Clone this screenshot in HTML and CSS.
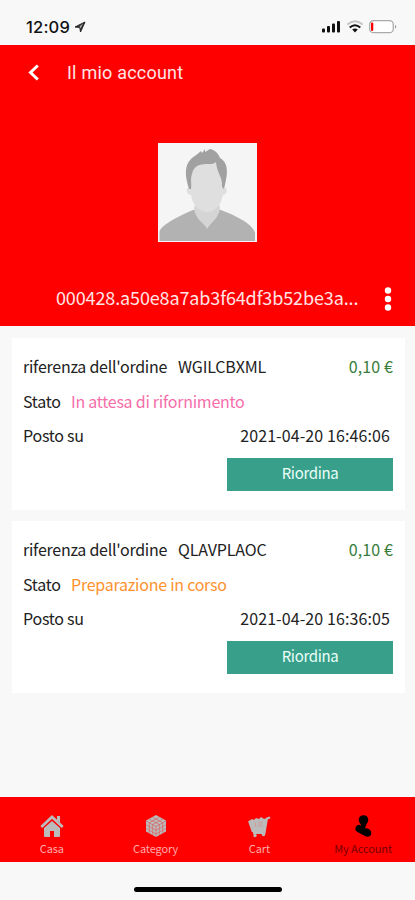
FILE: index.html
```html
<!DOCTYPE html>
<html lang="it">
<head>
<meta charset="utf-8">
<meta name="viewport" content="width=device-width, initial-scale=1">
<title>Il mio account</title>
<link rel="stylesheet" href="styles.css">
</head>
<body>
<div class="status">
  <span class="time">12:09</span>
  <svg class="loc" width="12" height="12" viewBox="0 0 12 12"><path d="M1 6 11 1 6.5 11 5.8 6.4Z" fill="#333" stroke="#222" stroke-width="1" stroke-linejoin="round"/><path d="M5.5 5.5 9 2.5 6.6 7.6Z" fill="#aaa"/></svg>
  <svg class="signals" width="76" height="16" viewBox="0 0 76 16">
    <g fill="#111"><rect x="1" y="9.5" width="3" height="4" rx="1"/><rect x="6" y="7" width="3" height="6.500" rx="1"/><rect x="11" y="4.500" width="3" height="9" rx="1"/><rect x="16" y="2" width="3" height="11.500" rx="1"/></g>
    <g fill="none" stroke-width="2"><path d="M26.300 5.500Q34 -1 41.700 5.500" stroke="#c4c4c4"/><path d="M28.700 8.600Q34 4 39.300 8.600" stroke="#111"/></g>
    <path d="M31.200 10.500Q34 8.300 36.800 10.500L34 13.400Z" fill="#111"/>
    <rect x="48.700" y="1.700" width="23.600" height="12" rx="3.800" fill="#fff" stroke="#aaa" stroke-width="1.300"/><path d="M74 5.800Q76.500 7.700 74 9.600Z" fill="#999"/><rect x="50" y="3.500" width="2.300" height="8.500" rx="1" fill="#f00"/>
  </svg>
</div>
<header class="hero">
  <div class="bar">
    <svg width="12" height="18" viewBox="0 0 12 18"><path d="M10.800 1.500 3.500 8.500l7.300 7" fill="none" stroke="#fff" stroke-width="3"/></svg>
    <h1>Il mio account</h1>
  </div>
  <svg class="avatar" width="99" height="99" viewBox="0 0 99 99">
    <rect width="99" height="99" fill="#f5f5f5"/>
    <path d="M1.500 98V89C2 84 12 77 35 67L63 67C86 76 95 83 97 90V98Z" fill="#b2b2b2"/>
    <path d="M36 65 38 60H61L62 66C60 76 53 79 49 86C46 79 37 77 36 65Z" fill="#d5d5d5"/>
    <path d="M32 45C27 43 28 52 33 52C34 62 42 69 49 69C57 69 63 62 65 52C70 51 70 43 66 45V25L55 16 34 21Z" fill="#dfdfdf"/>
    <path d="M31 46C27 33 26 23 33 16C36 13 39 12 43 8L44 10 47 6 47 9 52 6C58 7 61 12 62 15C71 20 70 31 66 46L64 44C65 34 59 31 58 19C54 24 37 16 34 31C32 37 34 40 33 46Z" fill="#a1a1a1"/>
  </svg>
  <div class="user">
    <span class="user-id">000428.a50e8a7ab3f64df3b52be3a...</span>
    <svg width="8" height="24" viewBox="0 0 8 24" fill="#fff"><circle cx="4" cy="3.500" r="3.200"/><circle cx="4" cy="12" r="3.200"/><circle cx="4" cy="20.500" r="3.200"/></svg>
  </div>
</header>
<main class="orders">
  <article class="order">
    <div class="row"><span class="label">riferenza dell'ordine</span><span class="ref">WGILCBXML</span><span class="price">0,10 €</span></div>
    <div class="row"><span class="short">Stato</span><span class="pending">In attesa di rifornimento</span></div>
    <div class="row"><span class="placed">Posto su</span><time>2021-04-20 16:46:06</time></div>
    <button>Riordina</button>
  </article>
  <article class="order">
    <div class="row"><span class="label">riferenza dell'ordine</span><span class="ref">QLAVPLAOC</span><span class="price">0,10 €</span></div>
    <div class="row"><span class="short">Stato</span><span class="preparing">Preparazione in corso</span></div>
    <div class="row"><span class="placed">Posto su</span><time>2021-04-20 16:36:05</time></div>
    <button>Riordina</button>
  </article>
</main>
<nav class="tabs">
  <a class="tab"><svg width="24" height="24" viewBox="0 0 24 24" fill="#bbb"><path d="M12 7 20 14V22a1 1 0 0 1-1 1h-5v-6h-4v6H5a1 1 0 0 1-1-1V14Z"/><path d="M1.300 13 12 3 22.700 13" fill="none" stroke="#bbb" stroke-width="2.800"/><path d="M17 2H20V9L17 6Z"/></svg><span>Casa</span></a>
  <a class="tab"><svg width="24" height="24" viewBox="0 0 24 24"><path d="M12 1 22 6.500V17.500L12 23 2 17.500V6.500Z" fill="#bbb"/><path d="M2 7 12 12.500 22 7M12 12.500V23M5.300 5 15.300 10.500V21M8.600 3.200 18.600 8.700V19.500M18.700 5 8.700 10.500V21M15.400 3.200 5.400 8.700V19.500M2 10.800 12 16.300 22 10.800M2 14.500 12 20 22 14.500" fill="none" stroke="#d55" stroke-width=".6"/></svg><span>Category</span></a>
  <a class="tab"><svg width="24" height="24" viewBox="0 0 24 24"><path d="M2 7 5 5 7 6 9 4 12 5 14 3 17 5 20 4 18 19H6Z" fill="#bbb"/><path d="M23 3.500 20 4.500 17.500 19H6M2 7 5.500 17H18" fill="none" stroke="#bbb" stroke-width="2"/><path d="M8 8 9 13M12 7V13M15 7 14 13" stroke="#db8585" stroke-width=".6"/><circle cx="8" cy="21.500" r="1.700" fill="#bbb"/><circle cx="16.500" cy="20.500" r="1.700" fill="#bbb"/></svg><span>Cart</span></a>
  <a class="tab active"><svg width="24" height="24" viewBox="0 0 24 24"><circle cx="12.500" cy="6" r="4.800"/><path d="M9 8H16Q15 12 14 14L18 15Q21 17 20 21Q18 24 14 22L6.500 18Q3 16 5 12.500Q7 9.500 10 12Z"/></svg><span>My Account</span></a>
</nav>
<div class="home"></div>
</body>
</html>
```
FILE: styles.css
```css
* { box-sizing: border-box; }
body {
  margin: 0;
  width: 415px;
  height: 900px;
  display: flex;
  flex-direction: column;
  background: #f8f8f8;
  color: #222;
  font: 16px/20px "Noto Sans CJK SC", sans-serif;
  white-space: nowrap;
  overflow: hidden;
}
.status { height: 45px; display: flex; align-items: center; padding: 9px 18px 0 26px; }
.time { font: 500 16.500px/20px Inter, sans-serif; width: 48px; color: #111; letter-spacing: .2px; }
.signals { margin-left: auto; }
.hero { height: 281px; background: #f00; color: #fff; display: flex; flex-direction: column; }
.bar { height: 56px; display: flex; align-items: center; padding-left: 27px; gap: 28px; }
h1 { margin: 0; font: 400 18px/22px Roboto, sans-serif; letter-spacing: .22px; color: #ffe5e5; }
.avatar { align-self: center; margin-top: 42px; }
.user { display: flex; align-items: center; justify-content: space-between; padding: 0 23px 0 56px; margin-top: 44px; height: 26px; color: #ffe5e5; }
.user-id { font-size: 18px; letter-spacing: -.13px; padding-bottom: 4px; }
.orders { flex: 1; padding: 12px 10px 0 12px; display: flex; flex-direction: column; gap: 11px; }
.order { height: 172px; background: #fff; padding: 11px 12px 0 11px; display: flex; flex-direction: column; }
.row { height: 34.500px; display: flex; align-items: center; letter-spacing: -.25px; }
.label { width: 155px; }
.ref { letter-spacing: -.15px; }
.short { width: 48px; }
.price { margin-left: auto; color: #397d3d; letter-spacing: .1px; }
.pending { color: #f56eaa; }
.preparing { color: #ff922e; }
time { margin-left: auto; padding-right: 3px; letter-spacing: .1px; }
button { align-self: flex-end; width: 166px; height: 33px; margin-top: 5px; border: 0; padding: 0 0 3px; background: #389f8a; color: #eafff9; font: inherit; font-size: 15px; letter-spacing: -.35px; }
.tabs { height: 65px; background: #f00; display: grid; grid-template-columns: repeat(4, 1fr); }
.tab { display: flex; flex-direction: column; align-items: center; padding-top: 17px; color: #ffaaaa; font-size: 11px; line-height: 20px; letter-spacing: -.1px; }
.active { color: #700; }
.active svg { fill: #000; }
.home { width: 148px; height: 5px; border-radius: 3px; background: #000; margin: 25px auto 8px; }
```
